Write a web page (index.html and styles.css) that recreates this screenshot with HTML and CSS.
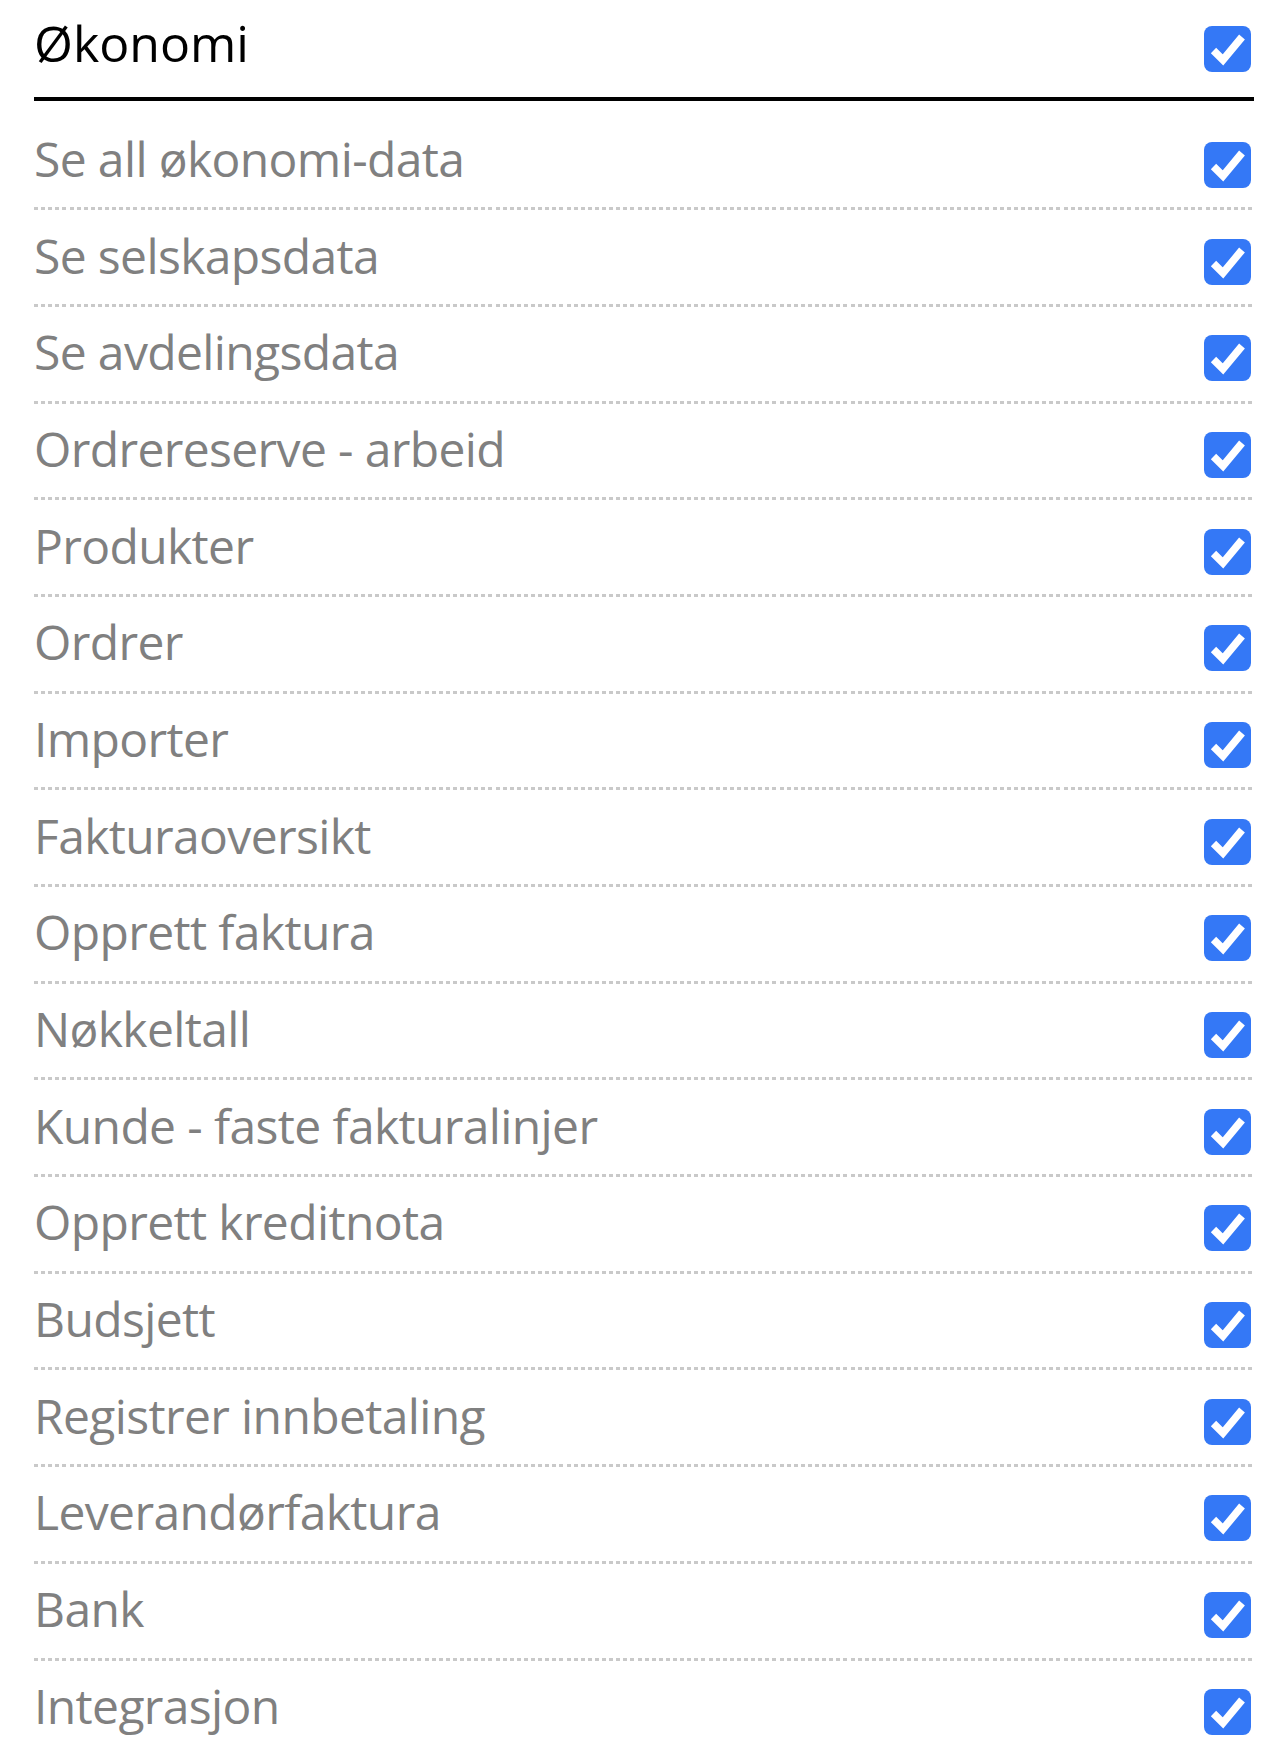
FILE: index.html
```html
<!DOCTYPE html>
<html lang="no">
<head>
<meta charset="utf-8">
<title>Økonomi</title>
<link rel="stylesheet" href="styles.css">
</head>
<body>
<section class="perm-group">
  <header class="group-head">
    <h2 class="group-title">Økonomi</h2>
    <span class="check"><svg viewBox="0 0 47 46"><polyline points="9.5,24.5 19,34 38,11"/></svg></span>
  </header>
  <ul class="perm-list">
    <li class="perm-row"><span class="perm-label">Se all økonomi-data</span><span class="check"><svg viewBox="0 0 47 46"><polyline points="9.5,24.5 19,34 38,11"/></svg></span></li>
    <li class="perm-row"><span class="perm-label">Se selskapsdata</span><span class="check"><svg viewBox="0 0 47 46"><polyline points="9.5,24.5 19,34 38,11"/></svg></span></li>
    <li class="perm-row"><span class="perm-label">Se avdelingsdata</span><span class="check"><svg viewBox="0 0 47 46"><polyline points="9.5,24.5 19,34 38,11"/></svg></span></li>
    <li class="perm-row"><span class="perm-label">Ordrereserve - arbeid</span><span class="check"><svg viewBox="0 0 47 46"><polyline points="9.5,24.5 19,34 38,11"/></svg></span></li>
    <li class="perm-row"><span class="perm-label">Produkter</span><span class="check"><svg viewBox="0 0 47 46"><polyline points="9.5,24.5 19,34 38,11"/></svg></span></li>
    <li class="perm-row"><span class="perm-label">Ordrer</span><span class="check"><svg viewBox="0 0 47 46"><polyline points="9.5,24.5 19,34 38,11"/></svg></span></li>
    <li class="perm-row"><span class="perm-label">Importer</span><span class="check"><svg viewBox="0 0 47 46"><polyline points="9.5,24.5 19,34 38,11"/></svg></span></li>
    <li class="perm-row"><span class="perm-label">Fakturaoversikt</span><span class="check"><svg viewBox="0 0 47 46"><polyline points="9.5,24.5 19,34 38,11"/></svg></span></li>
    <li class="perm-row"><span class="perm-label">Opprett faktura</span><span class="check"><svg viewBox="0 0 47 46"><polyline points="9.5,24.5 19,34 38,11"/></svg></span></li>
    <li class="perm-row"><span class="perm-label">Nøkkeltall</span><span class="check"><svg viewBox="0 0 47 46"><polyline points="9.5,24.5 19,34 38,11"/></svg></span></li>
    <li class="perm-row"><span class="perm-label">Kunde - faste fakturalinjer</span><span class="check"><svg viewBox="0 0 47 46"><polyline points="9.5,24.5 19,34 38,11"/></svg></span></li>
    <li class="perm-row"><span class="perm-label">Opprett kreditnota</span><span class="check"><svg viewBox="0 0 47 46"><polyline points="9.5,24.5 19,34 38,11"/></svg></span></li>
    <li class="perm-row"><span class="perm-label">Budsjett</span><span class="check"><svg viewBox="0 0 47 46"><polyline points="9.5,24.5 19,34 38,11"/></svg></span></li>
    <li class="perm-row"><span class="perm-label">Registrer innbetaling</span><span class="check"><svg viewBox="0 0 47 46"><polyline points="9.5,24.5 19,34 38,11"/></svg></span></li>
    <li class="perm-row"><span class="perm-label">Leverandørfaktura</span><span class="check"><svg viewBox="0 0 47 46"><polyline points="9.5,24.5 19,34 38,11"/></svg></span></li>
    <li class="perm-row"><span class="perm-label">Bank</span><span class="check"><svg viewBox="0 0 47 46"><polyline points="9.5,24.5 19,34 38,11"/></svg></span></li>
    <li class="perm-row"><span class="perm-label">Integrasjon</span><span class="check"><svg viewBox="0 0 47 46"><polyline points="9.5,24.5 19,34 38,11"/></svg></span></li>
  </ul>
</section>
</body>
</html>
```

FILE: styles.css
```css
html, body {
  margin: 0;
  padding: 0;
  background: #ffffff;
}

body {
  font-family: "Open Sans", "Liberation Sans", sans-serif;
}

.perm-group {
  width: 1220px;
  margin-left: 34px;
}

.group-head {
  display: flex;
  align-items: center;
  justify-content: space-between;
  height: 97px;
  border-bottom: 4px solid #000000;
  box-sizing: content-box;
}

.group-title {
  margin: 0 0 11px 0;
  font-size: 50px;
  font-weight: 400;
  line-height: 60px;
  color: #000000;
}

.perm-list {
  list-style: none;
  margin: 12.5px 0 0 0;
  padding: 0;
}

.perm-row {
  display: flex;
  align-items: center;
  justify-content: space-between;
  height: 93.7px;
  background-image: repeating-linear-gradient(to right, #c9c9c9 0, #c9c9c9 4px, transparent 4px, transparent 7.1px);
  background-size: 100% 3px;
  background-position: left bottom;
  background-repeat: no-repeat;
  padding-bottom: 3px;
}

.perm-row:last-child {
  background-image: none;
}

.perm-label {
  font-size: 48px;
  line-height: 60px;
  letter-spacing: -0.63px;
  color: #808080;
  margin-bottom: 3px;
}

.check {
  display: block;
  width: 47px;
  height: 46px;
  margin-right: 3px;
  margin-top: 9px;
  border-radius: 8px;
  background: #3478f6;
}

.group-head .check {
  margin-top: 0;
}

.check svg {
  display: block;
  width: 47px;
  height: 46px;
}

.check polyline {
  fill: none;
  stroke: #ffffff;
  stroke-width: 7.5;
  stroke-linecap: butt;
  stroke-linejoin: miter;
}
```
